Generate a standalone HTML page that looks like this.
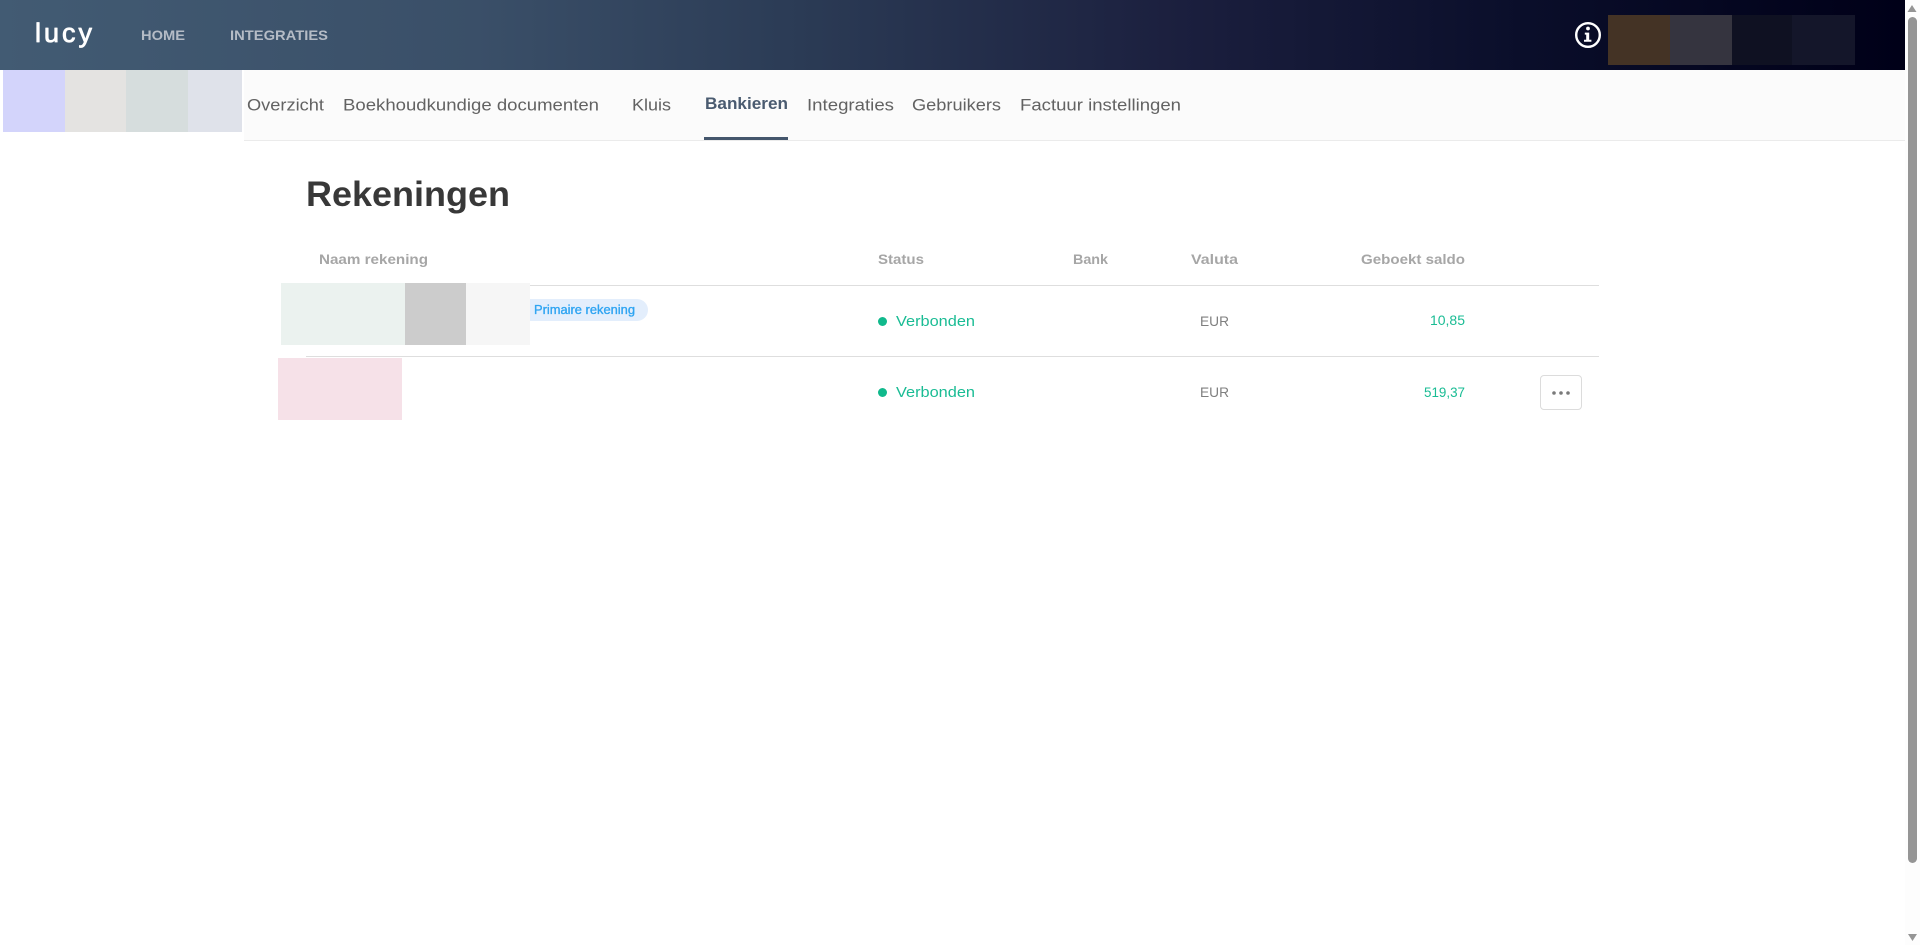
<!DOCTYPE html>
<html lang="nl">
<head>
<meta charset="utf-8">
<title>Rekeningen</title>
<style>
html,body{margin:0;padding:0;width:1920px;height:945px;overflow:hidden;background:#fff}
svg{display:block;position:absolute;left:0;top:0}
text{font-family:"Liberation Sans",sans-serif}
.nav{font-size:17px;fill:#626262}
.th{font-size:14px;font-weight:bold;fill:#a6a6a6}
.g{font-size:15px;fill:#1abc94}
.e{font-size:14px;fill:#7f7f7f}
</style>
</head>
<body>
<svg width="1920" height="945" viewBox="0 0 1920 945">
<defs>
<linearGradient id="hd" x1="0" y1="0" x2="1905" y2="0" gradientUnits="userSpaceOnUse">
<stop offset="0" stop-color="#425b73"/>
<stop offset=".25" stop-color="#3a4f68"/>
<stop offset=".42" stop-color="#2b3b55"/>
<stop offset=".62" stop-color="#1b1f3e"/>
<stop offset=".8" stop-color="#0a0e2a"/>
<stop offset="1" stop-color="#000018"/>
</linearGradient>
</defs>

<!-- sub navigation -->
<rect x="0" y="70" width="1905" height="70" fill="#fbfbfb"/>
<rect x="0" y="140" width="1905" height="1" fill="#ebebeb"/>
<rect x="0" y="70" width="244" height="71" fill="#fff"/>

<!-- header -->
<rect x="0" y="0" width="1905" height="70" fill="url(#hd)"/>
<text x="35" y="42" font-size="27" fill="#fff" stroke="#fff" stroke-width=".8" stroke-linejoin="round" textLength="57" lengthAdjust="spacing">lucy</text>
<text x="141" y="40" font-size="14" font-weight="bold" fill="#b5bcc6" textLength="44" lengthAdjust="spacingAndGlyphs">HOME</text>
<text x="230" y="40" font-size="14" font-weight="bold" fill="#b5bcc6" textLength="98" lengthAdjust="spacingAndGlyphs">INTEGRATIES</text>

<!-- info icon -->
<circle cx="1588" cy="35" r="11.800" fill="none" stroke="#fff" stroke-width="2.400"/>
<circle cx="1588" cy="28.500" r="1.900" fill="#fff"/>
<path d="M1584.800 32.600h4.400v7.200h2.200v2h-7.400v-2h2.200v-5.200h-1.400z" fill="#fff"/>

<!-- redacted header blocks -->
<rect x="1608" y="15" width="62" height="50" fill="#443325"/>
<rect x="1670" y="15" width="62" height="50" fill="#35343f"/>
<rect x="1732" y="15" width="60" height="50" fill="#0f1122"/>
<rect x="1792" y="15" width="63" height="50" fill="#14162a"/>

<!-- redacted nav blocks -->
<rect x="3" y="70" width="62" height="62" fill="#d3d4fb"/>
<rect x="65" y="70" width="61" height="62" fill="#e4e3e1"/>
<rect x="126" y="70" width="62" height="62" fill="#d6dddd"/>
<rect x="188" y="70" width="54" height="62" fill="#dfe2ea"/>

<!-- nav items -->
<text class="nav" x="247" y="110.500" textLength="77" lengthAdjust="spacingAndGlyphs">Overzicht</text>
<text class="nav" x="343" y="110.500" textLength="256" lengthAdjust="spacingAndGlyphs">Boekhoudkundige documenten</text>
<text class="nav" x="632" y="110.500" textLength="39" lengthAdjust="spacingAndGlyphs">Kluis</text>
<text class="nav" x="705" y="109" textLength="83" lengthAdjust="spacingAndGlyphs" style="font-weight:bold;fill:#4a5b70">Bankieren</text>
<text class="nav" x="807" y="110.500" textLength="87" lengthAdjust="spacingAndGlyphs">Integraties</text>
<text class="nav" x="912" y="110.500" textLength="89" lengthAdjust="spacingAndGlyphs">Gebruikers</text>
<text class="nav" x="1020" y="110.500" textLength="161" lengthAdjust="spacingAndGlyphs">Factuur instellingen</text>
<rect x="704" y="137" width="84" height="3" fill="#44566c"/>

<!-- title -->
<text x="306" y="206" font-size="35" font-weight="bold" fill="#383838" textLength="204" lengthAdjust="spacingAndGlyphs">Rekeningen</text>

<!-- table head -->
<text class="th" x="319" y="264" textLength="109" lengthAdjust="spacingAndGlyphs">Naam rekening</text>
<text class="th" x="878" y="264" textLength="46" lengthAdjust="spacingAndGlyphs">Status</text>
<text class="th" x="1073" y="264" textLength="35" lengthAdjust="spacingAndGlyphs">Bank</text>
<text class="th" x="1191" y="264" textLength="47" lengthAdjust="spacingAndGlyphs">Valuta</text>
<text class="th" x="1361" y="264" textLength="104" lengthAdjust="spacingAndGlyphs">Geboekt saldo</text>

<rect x="306" y="285" width="1293" height="1" fill="#dedede"/>
<rect x="306" y="356" width="1293" height="1" fill="#dedede"/>

<!-- row 1 -->
<rect x="281" y="283" width="124" height="62" fill="#ebf2ef"/>
<rect x="405" y="283" width="61" height="62" fill="#cccccc"/>
<rect x="466" y="283" width="64" height="62" fill="#f6f6f6"/>
<path d="M530 299h107a11 11 0 0 1 0 22h-107z" fill="#e3eefc"/>
<text x="534" y="314" font-size="13" fill="#2ea4f2" stroke="#2ea4f2" stroke-width=".35" textLength="101" lengthAdjust="spacingAndGlyphs">Primaire rekening</text>
<circle cx="882.500" cy="321.500" r="4.500" fill="#10b98c"/>
<text class="g" x="896" y="326" textLength="79" lengthAdjust="spacingAndGlyphs">Verbonden</text>
<text class="e" x="1200" y="326" textLength="29" lengthAdjust="spacingAndGlyphs">EUR</text>
<text class="g" x="1430" y="325" style="font-size:14px" textLength="35" lengthAdjust="spacingAndGlyphs">10,85</text>

<!-- row 2 -->
<rect x="278" y="358" width="124" height="62" fill="#f6e1e8"/>
<circle cx="882.500" cy="392.500" r="4.500" fill="#10b98c"/>
<text class="g" x="896" y="397" textLength="79" lengthAdjust="spacingAndGlyphs">Verbonden</text>
<text class="e" x="1200" y="397" textLength="29" lengthAdjust="spacingAndGlyphs">EUR</text>
<text class="g" x="1424" y="397" style="font-size:14px" textLength="41" lengthAdjust="spacingAndGlyphs">519,37</text>
<rect x="1540.500" y="375.500" width="41" height="34" rx="3.500" fill="#fff" stroke="#dcdcdc"/>
<circle cx="1554" cy="393" r="1.800" fill="#7a7a7a"/>
<circle cx="1561" cy="393" r="1.800" fill="#7a7a7a"/>
<circle cx="1568" cy="393" r="1.800" fill="#7a7a7a"/>

<!-- scrollbar -->
<rect x="1905" y="0" width="15" height="945" fill="#fdfdfd"/>
<path d="M1912 5l4.500 7h-9z" fill="#959595"/>
<rect x="1908" y="17" width="9" height="846" rx="4.500" fill="#959595"/>
<path d="M1912.500 941l-4.500-7h9z" fill="#959595"/>
</svg>
</body>
</html>
